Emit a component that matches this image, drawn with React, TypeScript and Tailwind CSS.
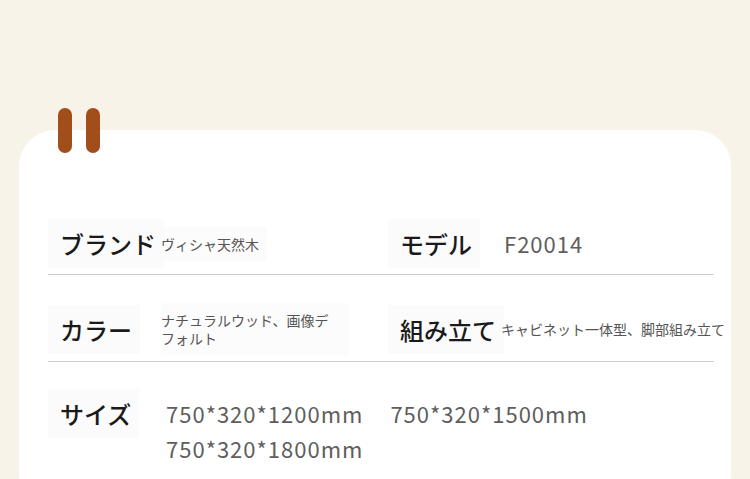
import React from 'react';

const font = { fontFamily: '"Noto Sans CJK JP", "Noto Sans", sans-serif' };

const Label: React.FC<{ text: string }> = ({ text }) => (
  <div className="w-[113px] shrink-0">
    <span className="inline-block bg-[#fbfbfb] pl-3 pr-2 py-2 text-[24px] leading-[33px] font-medium text-[#1a1a1a] whitespace-nowrap">
      {text}
    </span>
  </div>
);

const SmallValue: React.FC<{ text: string; className?: string }> = ({ text, className = '' }) => (
  <span className={`bg-[#fcfcfc] py-2 pr-2 text-[14px] leading-[18px] text-[#555] ${className}`}>{text}</span>
);

const App: React.FC = () => {
  return (
    <div className="w-[750px] h-[479px] overflow-hidden bg-[#f8f3e9] pt-[130px] px-[19px]" style={font}>
      <div className="relative h-[380px] bg-white rounded-[36px]">
        {/* binder tabs */}
        <div className="absolute left-[39px] top-[-22px] flex gap-[14px]">
          <span className="w-[14px] h-[45px] rounded-full bg-[#a24e1b]" />
          <span className="w-[14px] h-[45px] rounded-full bg-[#a24e1b]" />
        </div>

        <div className="pt-[89px] pl-[29px] pr-[17px]">
          <div className="grid grid-cols-[340px_1fr] pb-[6px] border-b border-[#cfcfcf]">
            <div className="flex items-center">
              <Label text="ブランド" />
              <SmallValue text="ヴィシャ天然木" />
            </div>
            <div className="flex items-center">
              <Label text="モデル" />
              <span className="text-[22px] tracking-[1px] text-[#5e5e5e] pl-[3px]">F20014</span>
            </div>
          </div>

          <div className="grid grid-cols-[340px_1fr] pt-[28px] pb-[6px] border-b border-[#cfcfcf]">
            <div className="flex items-center">
              <Label text="カラー" />
              <SmallValue text="ナチュラルウッド、画像デフォルト" className="w-[188px] [line-break:loose]" />
            </div>
            <div className="flex items-center">
              <Label text="組み立て" />
              <span className="whitespace-nowrap text-[14px] text-[#555]">キャビネット一体型、脚部組み立て</span>
            </div>
          </div>

          <div className="flex items-start pt-[27px]">
            <Label text="サイズ" />
            <div className="flex flex-wrap gap-x-[27px] pt-[7px] pl-[5px] w-[450px] text-[22px] tracking-[1px] leading-[35px] text-[#5e5e5e]">
              <span>750*320*1200mm</span>
              <span>750*320*1500mm</span>
              <span>750*320*1800mm</span>
            </div>
          </div>
        </div>
      </div>
    </div>
  );
};

export default App;
